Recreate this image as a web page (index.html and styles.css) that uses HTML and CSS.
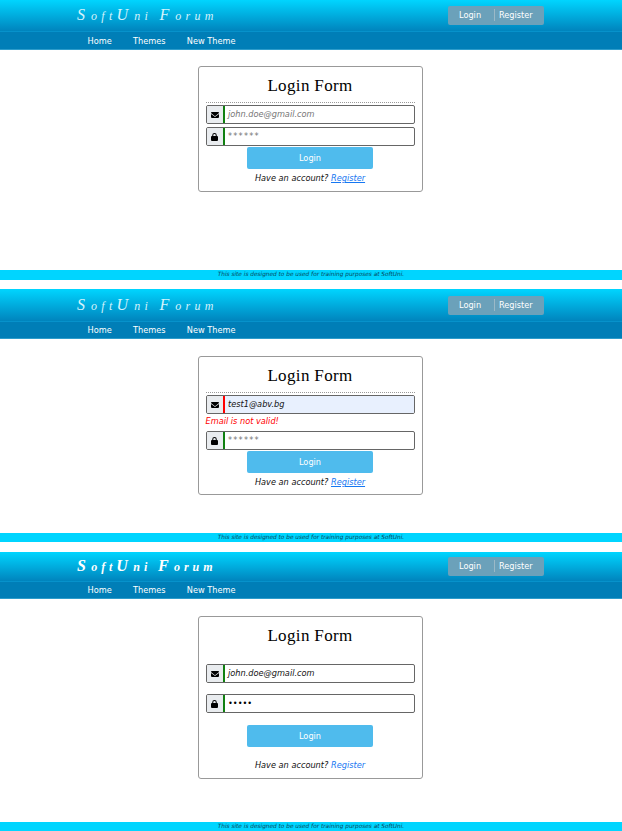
FILE: index.html
```
<!DOCTYPE html>
<html lang="en">
<head>
<meta charset="utf-8">
<title>SoftUni Forum</title>
<link rel="stylesheet" href="styles.css">
</head>
<body>
<svg class="defs" width="0" height="0">
  <symbol id="mail" viewBox="0 0 512 384"><path d="M48 0h416a48 48 0 0 1 28 86L276 248q-20 15-40 0L20 86A48 48 0 0 1 48 0zM0 128l217 163q39 29 78 0l217-163v192a64 64 0 0 1-64 64H64a64 64 0 0 1-64-64z"/></symbol>
  <symbol id="lock" viewBox="0 0 448 512"><path d="M144 144v48h160v-48a80 80 0 0 0-160 0zM80 192v-48a144 144 0 0 1 288 0v48h16a64 64 0 0 1 64 64v192a64 64 0 0 1-64 64H64a64 64 0 0 1-64-64V256a64 64 0 0 1 64-64z"/></symbol>
</svg>

<section class="screen first">
  <header>
    <div class="top"><h1><b>S</b>oft<b>U</b>ni <b>F</b>orum</h1><div class="auth"><a>Login</a><a>Register</a></div></div>
    <nav><a>Home</a><a>Themes</a><a>New Theme</a></nav>
  </header>
  <main>
    <form class="card">
      <h2>Login Form</h2>
      <div class="field"><span class="icon"><svg class="mail"><use href="#mail"/></svg></span><span class="input hint">john.doe@gmail.com</span></div>
      <div class="field"><span class="icon"><svg class="lock"><use href="#lock"/></svg></span><span class="input hint stars">******</span></div>
      <div class="button">Login</div>
      <p class="account"><span>Have an account? <a>Register</a></span></p>
    </form>
  </main>
  <footer><span>This site is designed to be used for training purposes at SoftUni.</span></footer>
</section>

<section class="screen second">
  <header>
    <div class="top"><h1><b>S</b>oft<b>U</b>ni <b>F</b>orum</h1><div class="auth"><a>Login</a><a>Register</a></div></div>
    <nav><a>Home</a><a>Themes</a><a>New Theme</a></nav>
  </header>
  <main>
    <form class="card">
      <h2>Login Form</h2>
      <div class="field invalid"><span class="icon"><svg class="mail"><use href="#mail"/></svg></span><span class="input">test1@abv.bg</span></div>
      <p class="error">Email is not valid!</p>
      <div class="field"><span class="icon"><svg class="lock"><use href="#lock"/></svg></span><span class="input hint stars">******</span></div>
      <div class="button">Login</div>
      <p class="account"><span>Have an account? <a>Register</a></span></p>
    </form>
  </main>
  <footer><span>This site is designed to be used for training purposes at SoftUni.</span></footer>
</section>

<section class="screen third">
  <header>
    <div class="top"><h1><b>S</b>oft<b>U</b>ni <b>F</b>orum</h1><div class="auth"><a>Login</a><a>Register</a></div></div>
    <nav><a>Home</a><a>Themes</a><a>New Theme</a></nav>
  </header>
  <main>
    <form class="card">
      <h2>Login Form</h2>
      <div class="field"><span class="icon"><svg class="mail"><use href="#mail"/></svg></span><span class="input">john.doe@gmail.com</span></div>
      <div class="field"><span class="icon"><svg class="lock"><use href="#lock"/></svg></span><span class="input dots">•••••</span></div>
      <div class="button">Login</div>
      <p class="account"><span>Have an account? <a>Register</a></span></p>
    </form>
  </main>
  <footer><span>This site is designed to be used for training purposes at SoftUni.</span></footer>
</section>
</body>
</html>
```
FILE: styles.css
```
* { box-sizing: border-box; }
body {
  margin: 0;
  display: flex;
  flex-direction: column;
  background: #fff;
  color: #111;
  font: 8.2px/12px "DejaVu Sans", Verdana, sans-serif;
}
h1, h2, p { margin: 0; }
.defs { position: absolute; }

.screen { display: flex; flex-direction: column; }
.first { height: 280px; }
.second { height: 253px; margin-top: 9px; }
.third { height: 279px; margin-top: 10px; }

.top {
  height: 31px;
  padding: 0 78px 0 77px;
  display: flex;
  justify-content: space-between;
  align-items: center;
  background: linear-gradient(#00d5ff, #0084bd);
}
.second .top { height: 32px; }
.third .top { height: 29px; }
h1 {
  padding-top: 1px;
  color: #d4f4fd;
  font: italic 400 12px/20px "Snell Roundhand", "Liberation Serif", cursive;
  letter-spacing: 4.3px;
  white-space: nowrap;
}
h1 b { font-size: 16px; font-weight: inherit; line-height: 1; letter-spacing: 6px; }
.third h1 { padding-top: 0; font-weight: 700; letter-spacing: 3.9px; color: #fff; }
.third h1 b { letter-spacing: 5.4px; }
.auth {
  height: 19px;
  width: 96px;
  padding: 0 0 1px 11px;
  display: flex;
  align-items: center;
  border-radius: 2px;
  background: #6ba1ba;
  color: #fff;
}
.second .auth { margin-top: 1px; }
.auth a + a {
  margin-left: auto;
  width: 50px;
  padding-left: 4px;
  border-left: 1px solid #9bb9c7;
}
nav {
  height: 19px;
  padding: 0 0 0 87.5px;
  display: flex;
  align-items: center;
  gap: 21.3px;
  border-top: 1px solid #0792cb;
  border-bottom: 1px solid #2d9ccb;
  background: #007eb7;
  color: #fff;
}
.second nav { height: 18px; }
.third nav { height: 18px; }

main { flex: 1; display: flex; justify-content: center; align-items: flex-start; padding: 16px 2px 0 0; }
.second main { padding-top: 17px; }
.third main { padding-top: 17px; }
.card {
  width: 225px;
  height: 126px;
  padding: 8px 7px 0;
  display: flex;
  flex-direction: column;
  border: 1px solid #999;
  border-radius: 3px;
}
.second .card { height: 139px; }
.third .card { height: 163px; }
h2 {
  height: 28px;
  margin-bottom: 2px;
  border-bottom: 1px dotted #999;
  color: #000;
  font: 400 17px/22px "Liberation Serif", Georgia, serif;
  letter-spacing: .35px;
  text-align: center;
}
.third h2 { border-color: transparent; margin-bottom: 11px; }
.field {
  height: 19px;
  flex: none;
  display: flex;
  border: 1px solid #666;
  border-radius: 2px;
  overflow: hidden;
}
.field + .field { margin-top: 3px; }
.third .field + .field { margin-top: 11px; }
.icon {
  width: 16px;
  display: flex;
  align-items: center;
  justify-content: center;
  background: #e9ecef;
}
.mail { width: 8px; height: 6px; }
.lock { width: 7px; height: 8px; }
.input {
  flex: 1;
  padding-left: 3.5px;
  border-left: 2px solid #108010;
  line-height: 17px;
  font-style: italic;
}
.invalid .input { border-left-color: #f00; background: #e8f0fe; }
.hint { color: #757575; }
.stars { letter-spacing: 1.2px; }
.dots { font-style: normal; color: #000; }
.error { height: 17px; padding-top: 1px; color: #f00; font-style: italic; }
.button {
  width: 126px;
  height: 22px;
  flex: none;
  margin: 1px auto 0;
  border-radius: 2px;
  background: #4fbbed;
  color: #fff;
  line-height: 22px;
  text-align: center;
}
.third .button { margin-top: 12px; }
.account { margin-top: 3px; font-style: italic; text-align: center; }
.account a { color: #1677f2; text-decoration: underline; }
.third .account { margin-top: 12px; }
.third .account a { text-decoration: none; }

footer {
  height: 10px;
  background: #00d5ff;
  color: #064659;
  font-size: 5.8px;
  line-height: 9px;
  font-style: italic;
  text-align: center;
}
.second footer, .third footer { height: 9px; }
```
